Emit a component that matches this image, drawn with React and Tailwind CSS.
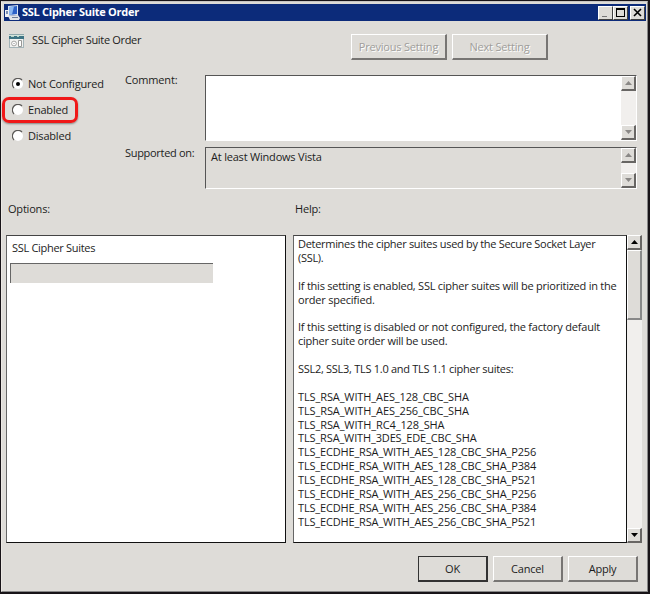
import React from 'react';

const helpLines = [
  { text: 'Determines the cipher suites used by the Secure Socket Layer', tracking: 'tracking-[-0.3px]' },
  { text: '(SSL).', tracking: 'tracking-[-0.3px]' },
  { text: '' },
  { text: 'If this setting is enabled, SSL cipher suites will be prioritized in the', tracking: 'tracking-[-0.24px]' },
  { text: 'order specified.', tracking: 'tracking-[-0.2px]' },
  { text: '' },
  { text: 'If this setting is disabled or not configured, the factory default', tracking: 'tracking-[-0.2px]' },
  { text: 'cipher suite order will be used.', tracking: 'tracking-[-0.25px]' },
  { text: '' },
  { text: 'SSL2, SSL3, TLS 1.0 and TLS 1.1 cipher suites:', tracking: 'tracking-[-0.28px]' },
  { text: '' },
  { text: 'TLS_RSA_WITH_AES_128_CBC_SHA', tracking: 'tracking-[-0.11px]' },
  { text: 'TLS_RSA_WITH_AES_256_CBC_SHA', tracking: 'tracking-[-0.11px]' },
  { text: 'TLS_RSA_WITH_RC4_128_SHA', tracking: 'tracking-[-0.11px]' },
  { text: 'TLS_RSA_WITH_3DES_EDE_CBC_SHA', tracking: 'tracking-[-0.14px]' },
  { text: 'TLS_ECDHE_RSA_WITH_AES_128_CBC_SHA_P256', tracking: 'tracking-[-0.16px]' },
  { text: 'TLS_ECDHE_RSA_WITH_AES_128_CBC_SHA_P384', tracking: 'tracking-[-0.16px]' },
  { text: 'TLS_ECDHE_RSA_WITH_AES_128_CBC_SHA_P521', tracking: 'tracking-[-0.16px]' },
  { text: 'TLS_ECDHE_RSA_WITH_AES_256_CBC_SHA_P256', tracking: 'tracking-[-0.16px]' },
  { text: 'TLS_ECDHE_RSA_WITH_AES_256_CBC_SHA_P384', tracking: 'tracking-[-0.16px]' },
  { text: 'TLS_ECDHE_RSA_WITH_AES_256_CBC_SHA_P521', tracking: 'tracking-[-0.16px]' },
];

function ComputerIcon() {
  return (
    <svg width="16" height="16" viewBox="0 0 16 16">
      <path d="M3 1l10-1v10l-10 1z" fill="#dce6f4" />
      <path d="M4 2l8-1v8l-8 1z" fill="#2c62c8" />
      <path d="M4 2l5-.6L7 9.6l-3 .4z" fill="#8cb8f0" />
      <path d="M0 5h4v7H0z" fill="#f0f2f4" />
      <path d="M1 6h2v3H1z" fill="#7c90b4" />
      <path d="M3 11l10-1 2 3-1 2H5z" fill="#e0e4e8" />
      <path d="M7 12h6v1H7z" fill="#6c7c98" />
    </svg>
  );
}

function PolicyIcon() {
  return (
    <svg width="15" height="16" viewBox="0 0 15 16" className="shrink-0">
      <path d="M0 1h15v14H0z" fill="#a4b4b8" />
      <path d="M0 1h15v1H0z" fill="#8ea8ac" />
      <path d="M0 2h15v1H0z" fill="#d4e4dc" />
      <path d="M0 3h15v3H0z" fill="#3e7484" />
      <path d="M2 3h3v1H2zM8 3h2v1H8z" fill="#b8d4c8" />
      <path d="M1 6h13v8H1z" fill="#f2f2f0" />
      <circle cx="5" cy="10.5" r="2.4" fill="#fff" stroke="#a4a4a2" />
      <path d="M9.5 7.5h3v6h-3z" fill="#fff" stroke="#989896" />
      <path d="M4.5 10h1v1h-1z" fill="#888" />
    </svg>
  );
}

function WindowButton({ children, className = '' }) {
  return (
    <div className={`h-[14px] w-[15px] border border-t-white border-l-white border-r-[#404040] border-b-[#404040] bg-[#dedcd8] ${className}`}>
      <svg width="13" height="12" viewBox="0 0 13 12" shapeRendering="crispEdges">
        {children}
      </svg>
    </div>
  );
}

function ScrollButton({ down, disabled }) {
  return (
    <div className="flex h-[15px] w-[15px] shrink-0 items-center justify-center border-t border-l border-r-2 border-b-2 border-t-white border-l-white border-r-[#686664] border-b-[#686664] bg-[#dedcd8]">
      <svg width="7" height="4" viewBox="0 0 7 4">
        <path d={down ? 'M0 0h7L3.5 4z' : 'M0 4h7L3.5 0z'} fill={disabled ? '#8a8886' : '#000'} />
      </svg>
    </div>
  );
}

function Radio({ label, checked }) {
  return (
    <div className="flex h-[26px] items-center">
      <svg width="12" height="12" viewBox="0 0 12 12">
        <circle cx="6" cy="6" r="5" fill="#fff" />
        <path d="M2 10A5.3 5.3 0 0 1 10 2" fill="none" stroke="#5c5a58" strokeWidth="1.2" />
        {checked && <circle cx="6" cy="6" r="2" fill="#000" />}
      </svg>
      <span className="ml-[4px] tracking-[-0.2px]">{label}</span>
    </div>
  );
}

function Button({ label, className = '' }) {
  return (
    <div className={`flex h-[26px] items-center justify-center tracking-[-0.2px] ${className}`}>
      {label}
    </div>
  );
}

const raised = 'border-t border-l border-r-2 border-b-2 border-t-white border-l-white border-r-[#777573] border-b-[#777573]';

export default function App() {
  return (
    <div className="h-[594px] w-[650px] overflow-hidden border-t border-r-2 border-b-2 border-l border-[#181418] bg-[#dedcd8] font-['Open_Sans',sans-serif] text-[11px] leading-[14px] whitespace-nowrap text-[#1c1c1c]">
      <div className="h-full w-full border-t border-l border-r border-b border-t-[#c8c6c4] border-l-[#ece9e4] border-r-[#888] border-b-[#888] pt-[2px] pl-[2px]">
        <div className="mr-px flex h-[17px] items-center bg-[#0c2b7a] pr-px pl-px">
          <ComputerIcon />
          <span className="mb-[2px] ml-px font-bold tracking-[-0.28px] text-white">SSL Cipher Suite Order</span>
          <div className="ml-auto flex">
            <WindowButton><path d="M3 9h5v1H3z" fill="#777" /></WindowButton>
            <WindowButton><path d="M2 1h9v9H2zM3 3v6h7V3z" fill="#000" fillRule="evenodd" /></WindowButton>
            <WindowButton className="ml-[2px]"><path d="M3 2l7 7M10 2l-7 7" stroke="#000" strokeWidth="1.6" shapeRendering="auto" /></WindowButton>
          </div>
        </div>

        <div className="flex h-[50px] pt-[12px] pl-[5px]">
          <PolicyIcon />
          <span className="ml-[8px] tracking-[-0.33px]">SSL Cipher Suite Order</span>
          <div className="ml-auto flex gap-[5px] pr-[99px] text-[#a09e9b] [text-shadow:1px_1px_0_#fff]">
            <Button label="Previous Setting" className={`mt-px w-[96px] ${raised}`} />
            <Button label="Next Setting" className={`mt-px w-[96px] ${raised}`} />
          </div>
        </div>

        <div className="flex h-[127px]">
          <div className="relative w-[121px] pl-[8px]">
            <Radio label="Not Configured" checked />
            <Radio label="Enabled" />
            <Radio label="Disabled" />
            <div className="absolute top-[26px] left-[-2px] h-[26px] w-[76px] rounded-[7px] border-[3px] border-[#f01818] shadow-[0_1px_2px_#0006]" />
          </div>
          <div className="w-[80px]">
            <div className="mt-[2px] h-[73px] tracking-[-0.15px]">Comment:</div>
            <div className="tracking-[-0.3px]">Supported on:</div>
          </div>
          <div className="mt-[4px] w-[432px]">
            <div className="flex h-[66px] border border-t-[#555] border-l-[#555] border-r-white border-b-white bg-white">
              <div className="flex-1" />
              <div className="flex flex-col justify-between bg-[#f1efed]">
                <ScrollButton disabled />
                <ScrollButton down disabled />
              </div>
            </div>
            <div className="mt-[6px] flex h-[42px] border border-t-[#555] border-l-[#555] border-r-white border-b-white">
              <div className="flex-1 pt-[2px] pl-[5px] tracking-[-0.2px]">At least Windows Vista</div>
              <div className="flex flex-col justify-between bg-[#f1efed]">
                <ScrollButton disabled />
                <ScrollButton down disabled />
              </div>
            </div>
          </div>
        </div>

        <div className="flex h-[37px] pt-[4px] pl-[4px] tracking-[-0.2px]">
          <div className="w-[287px]">Options:</div>
          <div>Help:</div>
        </div>

        <div className="flex h-[308px] pl-[2px]">
          <div className="w-[280px] shrink-0 border border-t-[#444] border-l-[#666] border-r-[#111] border-b-[#111] bg-white pt-[5px] pl-[3px]">
            <div className="pl-[2px] tracking-[-0.3px]">SSL Cipher Suites</div>
            <div className="mt-[8px] h-[20px] w-[203px] border-t border-l border-[#666] bg-[#dedcd8]" />
          </div>
          <div className="ml-[7px] w-[334px] shrink-0 border border-t-[#444] border-l-[#666] border-r-[#111] border-b-[#111] bg-white pt-px pl-[4px]">
            {helpLines.map((line, index) => (
              <div key={index} className={`h-[13.9px] ${line.tracking || ''}`}>{line.text}</div>
            ))}
          </div>
          <div className="flex w-[15px] shrink-0 flex-col bg-[#f1efed]">
            <ScrollButton />
            <div className="h-[70px] border-t border-l border-r-2 border-b-2 border-t-white border-l-white border-r-[#888] border-b-[#888] bg-[#dedcd8]" />
            <div className="flex-1" />
            <ScrollButton down />
          </div>
        </div>

        <div className="flex justify-end gap-[5px] pt-[13px] pr-[9px]">
          <Button label="OK" className="w-[70px] border-t border-r-2 border-b-2 border-l border-[#333]" />
          <Button label="Cancel" className={`w-[70px] ${raised}`} />
          <Button label="Apply" className={`w-[70px] ${raised}`} />
        </div>
      </div>
    </div>
  );
}
